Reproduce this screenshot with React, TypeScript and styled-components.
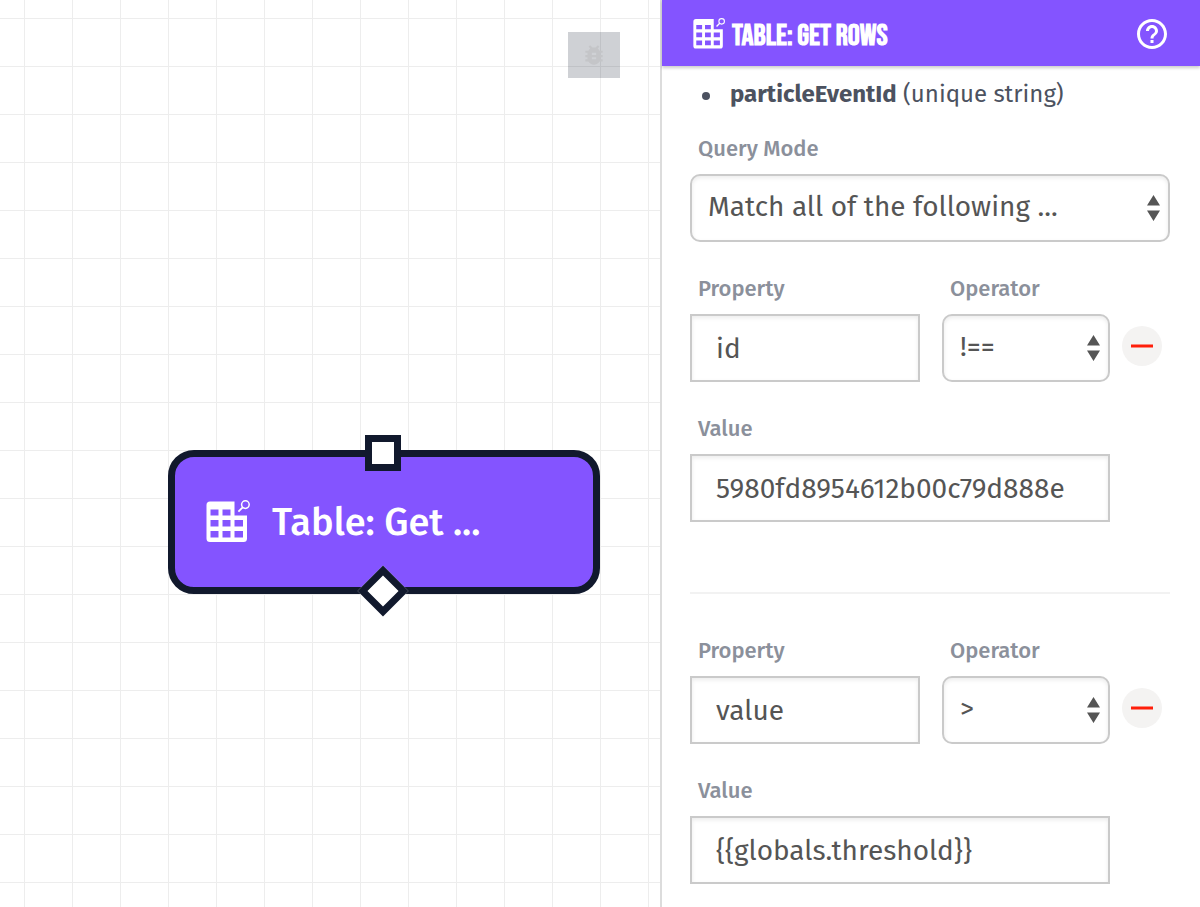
import React, { useId } from "react";
import styled, { createGlobalStyle } from "styled-components";

const GlobalStyle = createGlobalStyle`
  *, *::before, *::after { box-sizing: border-box; }
  body {
    margin: 0;
    background: #fff;
    font-family: "Fira Sans", "Noto Sans", sans-serif;
    color: #4c5260;
  }
  input, select, button { font: inherit; color: inherit; margin: 0; }
`;

const colors = {
  purple: "#8454ff",
  ink: "#11192d",
  border: "#cacaca",
  label: "#8b909b",
  value: "#555",
};

const Page = styled.div`
  display: flex;
  min-height: 100vh;
`;

const Canvas = styled.main`
  position: relative;
  flex: 1 1 0;
  min-width: 0;
  background-color: #fff;
  background-image:
    linear-gradient(to right, #ededed 1px, transparent 1px),
    linear-gradient(to bottom, #ededed 1px, transparent 1px);
  background-size: 48px 48px;
  background-position: 24px 18px;
`;

const DebugButton = styled.button`
  position: absolute;
  top: 32px;
  right: 40px;
  width: 52px;
  height: 46px;
  display: grid;
  place-items: center;
  padding: 0;
  border: 0;
  background: rgba(17, 25, 45, 0.2);
  color: #c4c5c8;
`;

const Node = styled.div`
  position: absolute;
  left: 168px;
  top: 450px;
  width: 432px;
  height: 144px;
  display: flex;
  align-items: center;
  gap: 22px;
  padding: 0 31px;
  border: 7px solid ${colors.ink};
  border-radius: 26px;
  background: ${colors.purple};
  color: #fff;
  font-size: 38px;
  font-weight: 500;
  line-height: 48px;
`;

const Port = styled.span<{ $kind: "input" | "output" }>`
  position: absolute;
  left: 190px;
  ${(p) => (p.$kind === "input" ? "top: -22px;" : "bottom: -22px; transform: rotate(45deg);")}
  width: 36px;
  height: 36px;
  border: 7px solid ${colors.ink};
  background: #fff;
`;

const Panel = styled.aside`
  flex: 0 0 45%;
  min-width: 0;
  border-left: 2px solid #dcdcdc;
  background: #fff;
`;

const PanelHeader = styled.header`
  display: flex;
  align-items: center;
  gap: 7px;
  height: 66px;
  padding: 2px 30px 0 31px;
  background: ${colors.purple};
  box-shadow: 0 2px 3px rgba(0, 0, 0, 0.2);
  color: #fff;
`;

const Title = styled.h1`
  flex: 1;
  margin: 0;
  padding-top: 4px;
  font-family: "Bebas Neue", "Liberation Sans Narrow", "Liberation Sans", sans-serif;
  font-size: 30px;
  font-weight: 700;
  line-height: 32px;
  text-transform: uppercase;
  white-space: nowrap;
`;

const HelpButton = styled.button`
  display: flex;
  padding: 0;
  border: 0;
  background: none;
  color: #fff;
`;

const PanelBody = styled.form`
  padding: 12px 30px 22px 28px;
`;

const PropertyList = styled.ul`
  margin: 0 0 26px;
  padding: 0 0 0 12px;
  list-style: none;
  font-size: 24px;
  line-height: 32px;
`;

const PropertyItem = styled.li`
  display: flex;
  align-items: center;
  gap: 20px;

  &::before {
    content: "";
    width: 8px;
    height: 8px;
    margin-top: 4px;
    border-radius: 50%;
    background: currentColor;
  }
`;

const FieldBox = styled.div<{ $inset?: boolean }>`
  display: flex;
  flex-direction: column;
  gap: 12px;
  flex: 1 1 0;
  min-width: 0;
  margin-right: ${(p) => (p.$inset ? "60px" : "0")};
`;

const Label = styled.label`
  padding-left: 8px;
  color: ${colors.label};
  font-size: 22px;
  font-weight: 500;
  line-height: 26px;
`;

const TextInput = styled.input`
  width: 100%;
  height: 68px;
  padding: 0 24px;
  border: 2px solid ${colors.border};
  border-radius: 0;
  background: #fff;
  box-shadow: inset 0 2px 4px rgba(0, 0, 0, 0.08);
  color: ${colors.value};
  font-size: 28px;
`;

const SelectWrap = styled.div`
  position: relative;
`;

const SelectBox = styled.select`
  appearance: none;
  display: block;
  width: 100%;
  height: 68px;
  padding: 0 40px 4px 16px;
  border: 2px solid ${colors.border};
  border-radius: 10px;
  background: #fff;
  box-shadow: inset 0 2px 4px rgba(0, 0, 0, 0.08);
  color: ${colors.value};
  font-size: 28px;
`;

const Arrows = styled.svg`
  position: absolute;
  right: 10px;
  top: 21px;
  pointer-events: none;
`;

const Condition = styled.fieldset`
  display: flex;
  flex-direction: column;
  gap: 34px;
  min-width: 0;
  margin: 0;
  padding: 34px 0 70px;
  border: 0;

  & + & {
    padding: 44px 0 0;
    border-top: 2px solid #f2f2f2;
  }
`;

const ConditionRow = styled.div`
  display: flex;
  align-items: flex-end;
  padding-right: 8px;
`;

const OperatorSlot = styled.div`
  display: flex;
  width: 168px;
  margin: 0 12px 0 22px;
`;

const RemoveButton = styled.button`
  width: 40px;
  height: 40px;
  display: grid;
  place-items: center;
  margin-bottom: 16px;
  padding: 0;
  border: 0;
  border-radius: 50%;
  background: #f4f3f2;
`;

const TableSearchIcon = ({ size }: { size: number }) => (
  <svg width={size} height={size} viewBox="0 0 44 44" aria-hidden="true">
    <path
      fill="currentColor"
      fillRule="evenodd"
      d="M4 1.500H28.500V15.500H41V38.500Q41 42 37.500 42H4Q0.500 42 0.500 38.500V5Q0.500 1.500 4 1.500Z
         M4.500 9.500V15.500H12.500V9.500Z M16.500 9.500V15.500H24.500V9.500Z
         M4.500 20V26.500H12.500V20Z M16.500 20V26.500H24.500V20Z M28.500 20V26.500H37V20Z
         M4.500 31V37.500H12.500V31Z M16.500 31V37.500H24.500V31Z M28.500 31V37.500H37V31Z"
    />
    <circle cx="39.400" cy="4.600" r="3.800" fill="none" stroke="currentColor" strokeWidth="1.500" />
    <path d="M36.700 7.300L32.400 11.600" stroke="currentColor" strokeWidth="1.800" />
  </svg>
);

const BugIcon = () => (
  <svg width="26" height="26" viewBox="0 0 24 24" fill="currentColor" aria-hidden="true">
    <path d="M20 8h-2.810c-.450-.780-1.070-1.450-1.820-1.960L17 4.410 15.590 3l-2.170 2.170C12.960 5.060 12.490 5 12 5c-.490 0-.960.060-1.410.170L8.410 3 7 4.410l1.620 1.630C7.880 6.550 7.260 7.220 6.810 8H4v2h2.090c-.050.330-.090.660-.090 1v1H4v2h2v1c0 .340.040.670.090 1H4v2h2.810c1.040 1.790 2.970 3 5.190 3s4.150-1.210 5.190-3H20v-2h-2.090c.050-.330.090-.660.090-1v-1h2v-2h-2v-1c0-.340-.040-.670-.090-1H20V8zm-6 8h-4v-2h4v2zm0-4h-4v-2h4v2z" />
  </svg>
);

const HelpIcon = () => (
  <svg width="36" height="36" viewBox="0 0 24 24" fill="currentColor" aria-hidden="true">
    <path d="M11 18h2v-2h-2v2zm1-16C6.480 2 2 6.480 2 12s4.480 10 10 10 10-4.480 10-10S17.520 2 12 2zm0 18c-4.410 0-8-3.590-8-8s3.590-8 8-8 8 3.590 8 8-3.590 8-8 8zm0-14c-2.210 0-4 1.790-4 4h2c0-1.100.900-2 2-2s2 .900 2 2c0 2-3 1.750-3 5h2c0-2.250 3-2.500 3-5 0-2.210-1.790-4-4-4z" />
  </svg>
);

const MinusIcon = () => (
  <svg width="22" height="4" viewBox="0 0 22 4" aria-hidden="true">
    <rect y="0.500" width="22" height="3" fill="#ff1f0a" />
  </svg>
);

type FieldProps = { label: string; value: string; inset?: boolean };

const TextField = ({ label, value, inset }: FieldProps) => {
  const id = useId();
  return (
    <FieldBox $inset={inset}>
      <Label htmlFor={id}>{label}</Label>
      <TextInput id={id} type="text" defaultValue={value} />
    </FieldBox>
  );
};

const SelectField = ({ label, value }: FieldProps) => {
  const id = useId();
  return (
    <FieldBox>
      <Label htmlFor={id}>{label}</Label>
      <SelectWrap>
        <SelectBox id={id} defaultValue={value}>
          <option value={value}>{value}</option>
        </SelectBox>
        <Arrows width="13" height="26" viewBox="0 0 13 26" fill={colors.value} aria-hidden="true">
          <path d="M6.500 0L13 10.500H0Z M0 15.500H13L6.500 26Z" />
        </Arrows>
      </SelectWrap>
    </FieldBox>
  );
};

const conditions = [
  { property: "id", operator: "!==", value: "5980fd8954612b00c79d888e" },
  { property: "value", operator: ">", value: "{{globals.threshold}}" },
];

export default function App() {
  return (
    <>
      <GlobalStyle />
      <Page>
        <Canvas>
          <DebugButton type="button" aria-label="Debug">
            <BugIcon />
          </DebugButton>
          <Node>
            <TableSearchIcon size={44} />
            Table: Get ...
            <Port $kind="input" />
            <Port $kind="output" />
          </Node>
        </Canvas>
        <Panel>
          <PanelHeader>
            <TableSearchIcon size={32} />
            <Title>Table: Get Rows</Title>
            <HelpButton type="button" aria-label="Help">
              <HelpIcon />
            </HelpButton>
          </PanelHeader>
          <PanelBody>
            <PropertyList>
              <PropertyItem>
                <span>
                  <strong>particleEventId</strong> (unique string)
                </span>
              </PropertyItem>
            </PropertyList>
            <SelectField label="Query Mode" value="Match all of the following ..." />
            {conditions.map((c) => (
              <Condition key={c.property}>
                <ConditionRow>
                  <TextField label="Property" value={c.property} />
                  <OperatorSlot>
                    <SelectField label="Operator" value={c.operator} />
                  </OperatorSlot>
                  <RemoveButton type="button" aria-label="Remove condition">
                    <MinusIcon />
                  </RemoveButton>
                </ConditionRow>
                <TextField label="Value" value={c.value} inset />
              </Condition>
            ))}
          </PanelBody>
        </Panel>
      </Page>
    </>
  );
}
